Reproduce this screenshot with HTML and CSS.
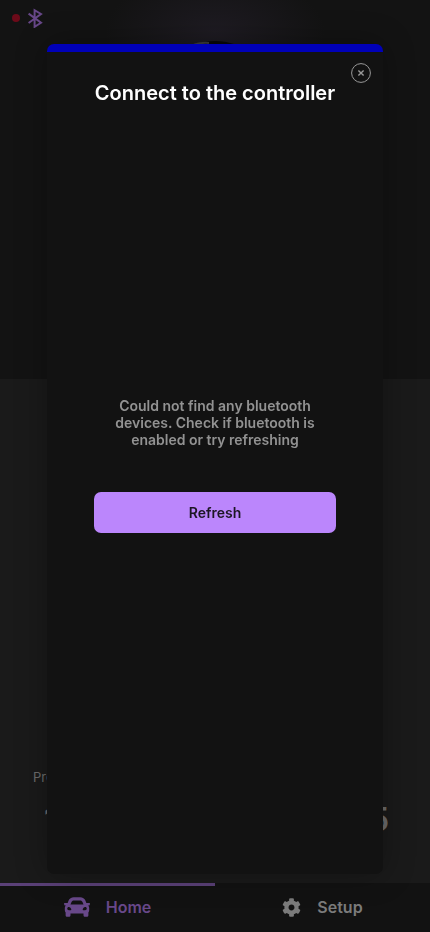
FILE: index.html
```html
<!DOCTYPE html>
<html lang="en">
<head>
<meta charset="utf-8">
<meta name="viewport" content="width=device-width, initial-scale=1">
<title>Controller</title>
<link rel="stylesheet" href="styles.css">
</head>
<body>
<div class="app">
  <main class="screen">
    <section class="hero">
      <div class="status">
        <span class="status-dot"></span>
        <svg class="status-icon" viewBox="0 0 16 20" aria-label="Bluetooth"><path d="M.6 5.6 13 14.8 6.6 18.8V2.2L13 6 .6 15"/></svg>
      </div>
      <svg class="dial" viewBox="0 0 120 120" aria-hidden="true"><circle class="dial-face" cx="60" cy="60" r="58"/><path class="dial-shine" d="M36 7Q46 3 54 4"/></svg>
    </section>
    <section class="readings">
      <div class="reading">
        <span class="reading-label">Preset</span>
        <span class="reading-value">1</span>
      </div>
      <div class="reading">
        <span class="reading-value">5</span>
      </div>
    </section>
  </main>
  <nav class="tabs">
    <a class="tab tab-active" href="#home">
      <svg class="tab-car" viewBox="0 64 512 384" aria-hidden="true"><path d="M499.99 176h-59.87l-16.64-41.6C406.38 91.63 365.57 64 319.5 64h-127c-46.06 0-86.88 27.63-103.99 70.4L71.87 176H12.01C4.2 176-1.53 183.34.37 190.91l6 24C7.7 220.25 12.5 224 18.01 224h20.07C24.65 235.73 16 252.78 16 272v48c0 16.12 6.16 30.67 16 41.93V416c0 17.67 14.33 32 32 32h32c17.67 0 32-14.33 32-32v-32h256v32c0 17.67 14.33 32 32 32h32c17.67 0 32-14.33 32-32v-54.07c9.84-11.25 16-25.8 16-41.93v-48c0-19.22-8.65-36.27-22.07-48H494c5.51 0 10.31-3.75 11.64-9.09l6-24c1.89-7.57-3.84-14.91-11.65-14.91zm-352.06-17.83c7.29-18.22 24.94-30.17 44.57-30.17h127c19.63 0 37.28 11.95 44.57 30.17L384 208H128l19.93-49.83zM96 319.8c-19.2 0-32-12.76-32-31.9S76.8 256 96 256s48 28.71 48 47.85-28.8 15.95-48 15.95zm320 0c-19.2 0-48 3.19-48-15.95S396.8 256 416 256s32 12.76 32 31.9-12.8 31.9-32 31.9z"/></svg>
      Home
    </a>
    <a class="tab" href="#setup">
      <svg class="tab-cog" viewBox="0 0 512 512" aria-hidden="true"><path d="M487.4 315.7l-42.6-24.6c4.3-23.2 4.3-47 0-70.2l42.6-24.6c4.9-2.8 7.1-8.6 5.5-14-11.1-35.6-30-67.8-54.7-94.6-3.8-4.1-10-5.1-14.8-2.3L380.8 110c-17.9-15.4-38.5-27.3-60.8-35.1V25.8c0-5.6-3.9-10.5-9.4-11.7-36.7-8.2-74.3-7.8-109.2 0-5.5 1.2-9.4 6.1-9.4 11.7V75c-22.2 7.9-42.8 19.8-60.8 35.1L88.7 85.5c-4.9-2.8-11-1.9-14.8 2.3-24.7 26.7-43.6 58.9-54.7 94.6-1.7 5.4.6 11.2 5.5 14L67.3 221c-4.3 23.2-4.3 47 0 70.2l-42.6 24.6c-4.9 2.8-7.1 8.6-5.5 14 11.1 35.6 30 67.8 54.7 94.6 3.8 4.1 10 5.1 14.8 2.3l42.6-24.6c17.9 15.4 38.5 27.3 60.8 35.1v49.2c0 5.6 3.9 10.5 9.4 11.7 36.7 8.2 74.3 7.8 109.2 0 5.5-1.2 9.4-6.1 9.4-11.7v-49.2c22.2-7.9 42.8-19.8 60.8-35.1l42.6 24.6c4.9 2.8 11 1.9 14.8-2.3 24.7-26.7 43.6-58.9 54.7-94.6 1.5-5.5-.7-11.3-5.6-14.1zM256 336c-44.1 0-80-35.9-80-80s35.9-80 80-80 80 35.9 80 80-35.9 80-80 80z"/></svg>
      Setup
    </a>
  </nav>
</div>
<div class="modal" role="dialog" aria-labelledby="modal-title">
  <button class="close" type="button" aria-label="Close"><svg viewBox="0 0 20 20"><circle cx="10" cy="10" r="9.4"/><path class="close-cross" d="M7.4 7.4l5.2 5.2M12.6 7.4l-5.2 5.2"/></svg></button>
  <h1 class="modal-title" id="modal-title">Connect to the controller</h1>
  <div class="modal-body">
    <p class="message">Could not find any bluetooth devices. Check if bluetooth is enabled or try refreshing</p>
    <button class="refresh" type="button">Refresh</button>
  </div>
</div>
</body>
</html>
```
FILE: styles.css
```css
* {
  box-sizing: border-box;
}

body {
  margin: 0;
  background: #121212;
  font-family: Inter, "Liberation Sans", sans-serif;
  font-weight: 600;
}

.app {
  display: flex;
  flex-direction: column;
  height: 100vh;
}

.screen {
  flex: 1;
  display: grid;
  grid-template-rows: 429fr 571fr;
  min-height: 0;
}

.hero {
  display: flex;
  flex-direction: column;
  background: radial-gradient(ellipse 110px 60px at 50% 32px, #1e1b22, transparent), #131313;
  overflow: hidden;
}

.status {
  display: flex;
  align-items: center;
  gap: 8px;
  padding: 8px 12px;
}

.status-dot {
  width: 8px;
  height: 8px;
  border-radius: 50%;
  background: #6c0a19;
}

.status-icon {
  width: 16px;
  height: 20px;
  fill: none;
  stroke: #674788;
  stroke-width: 2;
}

.dial {
  align-self: center;
  width: 120px;
  margin-top: 3px;
}

.dial-face {
  fill: #080809;
}

.dial-shine {
  fill: none;
  stroke: #3c3c3c;
  stroke-width: 2;
}

.readings {
  display: flex;
  justify-content: space-between;
  align-items: flex-end;
  padding: 0 41px 43px 33px;
  background: #1a1a1a;
  color: #6c6c6c;
}

.reading {
  display: flex;
  flex-direction: column;
  gap: 15px;
}

.reading-label {
  font-size: 13px;
  font-weight: 400;
  line-height: 16px;
}

.reading-value {
  font-size: 32px;
  line-height: 40px;
}

.reading-label + .reading-value {
  padding-left: 11px;
}

.tabs {
  display: flex;
  background: #121212;
}

.tab {
  flex: 1;
  display: flex;
  align-items: center;
  justify-content: center;
  gap: 16px;
  height: 49px;
  padding-bottom: 4px;
  border-top: 3px solid transparent;
  color: #7b7b7b;
  fill: currentColor;
  font-size: 16px;
  line-height: 20px;
  text-decoration: none;
}

.tab-active {
  border-color: #5b4178;
  color: #684889;
}

.tab-car {
  width: 26px;
  height: 20px;
}

.tab-cog {
  width: 19px;
  height: 19px;
}

.modal {
  position: fixed;
  inset: 44px 47px 58px;
  display: flex;
  flex-direction: column;
  padding: 28px 47px 0;
  border-top: 8px solid #0000b8;
  border-radius: 7px;
  background: #121212;
  box-shadow: 0 0 32px rgba(0, 0, 0, 0.3);
}

.close {
  position: absolute;
  top: 11px;
  right: 12px;
  width: 20px;
  height: 20px;
  padding: 0;
  border: 0;
  background: none;
}

.close svg {
  display: block;
  fill: none;
  stroke: #999;
}

.close-cross {
  stroke-width: 1.4;
}

.modal-title {
  margin: 0;
  color: #fff;
  font-size: 20px;
  font-weight: 600;
  line-height: 26px;
  text-align: center;
  white-space: nowrap;
}

.modal-body {
  flex: 1;
  display: flex;
  flex-direction: column;
  justify-content: center;
  gap: 44px;
  padding-bottom: 51px;
}

.message {
  margin: 0;
  padding: 0 16px;
  color: #929292;
  font-size: 14px;
  line-height: 17px;
  text-align: center;
}

.refresh {
  height: 41px;
  border: 0;
  border-radius: 7px;
  background: #bb86fc;
  color: #1c1624;
  font: inherit;
  font-size: 14px;
}
```
